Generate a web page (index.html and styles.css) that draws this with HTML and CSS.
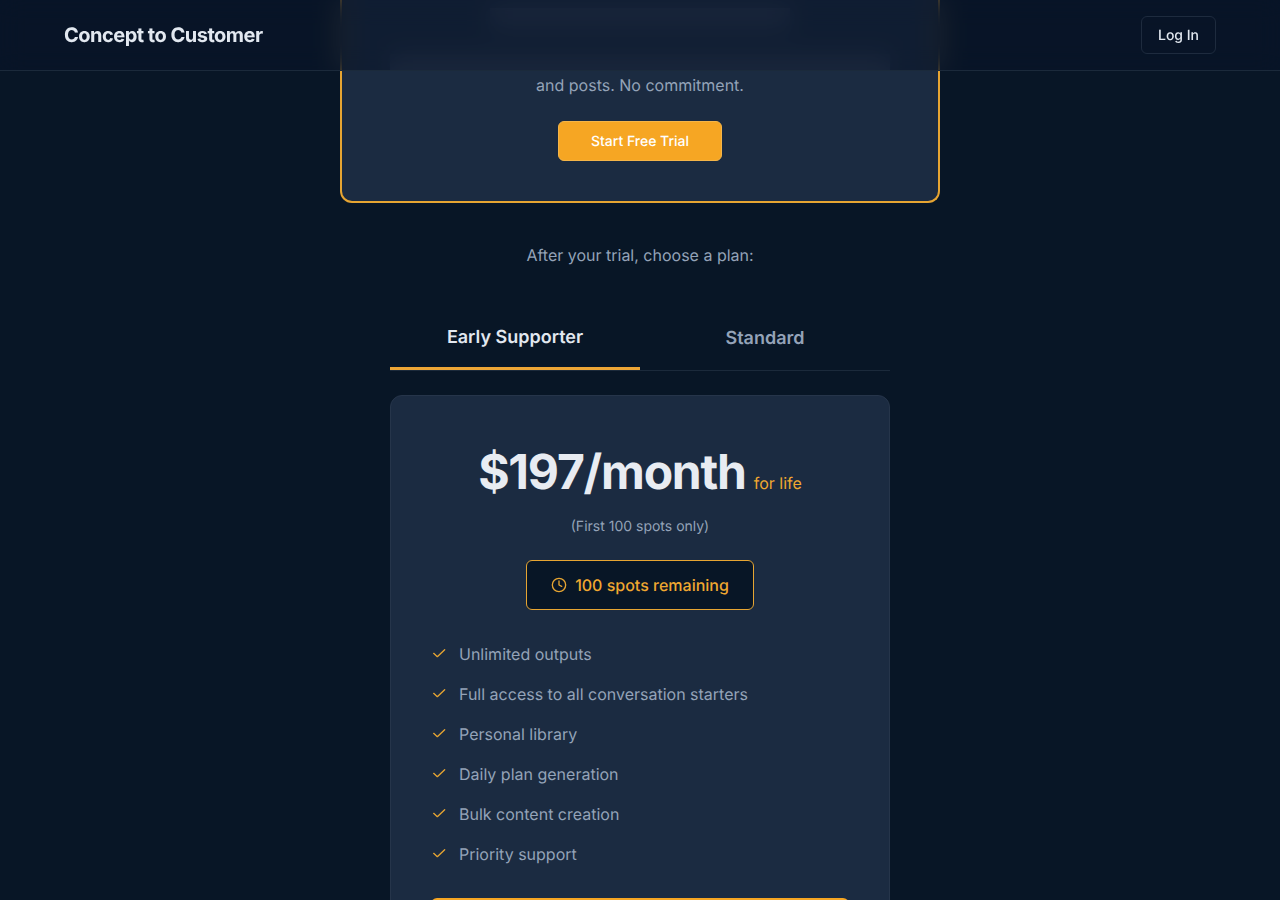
FILE: index.html
```html
<!DOCTYPE html>
<html lang="en">
<head>
<meta charset="utf-8">
<meta name="viewport" content="width=device-width, initial-scale=1">
<title>Concept to Customer</title>
<link rel="stylesheet" href="styles.css">
</head>
<body>
<svg class="sprite" aria-hidden="true">
  <symbol id="check" viewBox="0 0 24 24"><path d="M20.500 5.500L9.500 16l-5.500-5"/></symbol>
</svg>
<header class="header">
  <a class="brand" href="#">Concept to Customer</a>
  <button class="login" type="button">Log In</button>
</header>
<main class="page">
  <section class="trial">
    <div class="trial-title" aria-hidden="true"></div>
    <div class="trial-line" aria-hidden="true"></div>
    <p class="trial-text">and posts. No commitment.</p>
    <button class="cta" type="button">Start Free Trial</button>
  </section>
  <p class="choose">After your trial, choose a plan:</p>
  <section class="plans">
    <div class="tabs" role="tablist">
      <button class="tab tab-active" type="button" role="tab" aria-selected="true">Early Supporter</button>
      <button class="tab" type="button" role="tab" aria-selected="false">Standard</button>
    </div>
    <div class="plan" role="tabpanel">
      <div class="price"><span class="amount">$197/month</span><span class="term">for life</span></div>
      <p class="note">(First 100 spots only)</p>
      <div class="spots">
        <svg class="icon" viewBox="0 0 24 24" aria-hidden="true"><circle cx="12" cy="12" r="10"/><path d="M12 6v6l4 2"/></svg>
        <span>100 spots remaining</span>
      </div>
      <ul class="features">
        <li><svg class="icon" aria-hidden="true"><use href="#check"/></svg>Unlimited outputs</li>
        <li><svg class="icon" aria-hidden="true"><use href="#check"/></svg>Full access to all conversation starters</li>
        <li><svg class="icon" aria-hidden="true"><use href="#check"/></svg>Personal library</li>
        <li><svg class="icon" aria-hidden="true"><use href="#check"/></svg>Daily plan generation</li>
        <li><svg class="icon" aria-hidden="true"><use href="#check"/></svg>Bulk content creation</li>
        <li><svg class="icon" aria-hidden="true"><use href="#check"/></svg>Priority support</li>
      </ul>
      <div class="plan-action"></div>
    </div>
  </section>
</main>
</body>
</html>
```
FILE: styles.css
```css
* { box-sizing: border-box; }
body {
  margin: 0;
  height: 100vh;
  overflow: hidden;
  background: #081626;
  color: #94a3b8;
  font-family: Inter, sans-serif;
  font-size: 16px;
  line-height: 24px;
  text-rendering: geometricPrecision;
}
p, ul { margin: 0; padding: 0; }
button { font-family: inherit; text-rendering: inherit; cursor: pointer; }
.sprite { display: none; }
.header {
  position: fixed;
  top: 0;
  left: 0;
  right: 0;
  z-index: 10;
  display: flex;
  align-items: center;
  justify-content: space-between;
  padding: 16px 64px;
  border-bottom: 1px solid #1b2a3b;
  background: rgba(9, 20, 40, 0.6);
  backdrop-filter: blur(12px);
}
.brand {
  color: #e2e8f0;
  font-size: 20px;
  font-weight: 700;
  letter-spacing: -0.025em;
  text-decoration: none;
}
.login {
  height: 38px;
  padding: 0 16px;
  border: 1px solid #1e2b3e;
  border-radius: 6px;
  background: transparent;
  color: #e2e8f0;
  font-size: 14px;
  font-weight: 500;
}
.page {
  display: flex;
  flex-direction: column;
  align-items: center;
}
.trial {
  display: flex;
  flex-direction: column;
  align-items: center;
  width: 100%;
  max-width: 600px;
  padding: 8px 40px 40px;
  border: solid #e6a532;
  border-width: 0 2px 2px;
  border-radius: 0 0 12px 12px;
  background: #1b2b41;
}
.trial-title {
  width: 300px;
  max-width: 100%;
  height: 20px;
  margin-bottom: 26px;
  background: #344158;
}
.trial-line {
  width: 500px;
  max-width: 100%;
  height: 16px;
  margin-bottom: 3px;
  background: #344158;
}
.trial-text { margin-bottom: 24px; }
.cta {
  height: 40px;
  padding: 0 32px;
  border: 1px solid #f5b548;
  border-radius: 6px;
  background: #f6a623;
  color: #fff;
  font-size: 14px;
  font-weight: 500;
}
.choose { margin: 40px 0; }
.plans { width: 100%; max-width: 500px; }
.tabs {
  display: flex;
  border-bottom: 1px solid #1b2a3b;
  margin-bottom: 24px;
}
.tab {
  flex: 1;
  height: 63px;
  padding: 0;
  border: 0;
  background: transparent;
  color: #94a3b8;
  font-size: 18px;
  font-weight: 600;
}
.tab-active {
  border-bottom: 3px solid #eda636;
  color: #e2e8f0;
}
.plan {
  display: flex;
  flex-direction: column;
  align-items: center;
  padding: 40px;
  border: 1px solid #26354a;
  border-radius: 12px;
  background: #1b2b41;
}
.price {
  display: flex;
  align-items: baseline;
  gap: 8px;
}
.amount {
  color: #e8ecf2;
  font-size: 48px;
  font-weight: 700;
  line-height: 72px;
  letter-spacing: -0.025em;
}
.term { color: #f0a830; }
.note {
  margin: 8px 0 22px;
  font-size: 14px;
  line-height: 22px;
}
.spots {
  display: flex;
  align-items: center;
  gap: 8px;
  padding: 12px 24px;
  border: 1px solid #e6a532;
  border-radius: 6px;
  background: #081626;
  color: #f0a830;
  font-weight: 500;
}
.icon {
  flex: none;
  width: 16px;
  height: 16px;
  fill: none;
  stroke: #e6a532;
  stroke-width: 2;
  stroke-linecap: round;
  stroke-linejoin: round;
}
.features {
  display: flex;
  flex-direction: column;
  gap: 16px;
  align-self: stretch;
  margin: 32px 0;
  list-style: none;
}
.features li {
  display: flex;
  align-items: center;
  gap: 12px;
}
.plan-action {
  align-self: stretch;
  height: 40px;
  border-radius: 6px;
  background: #f6a623;
}
```
